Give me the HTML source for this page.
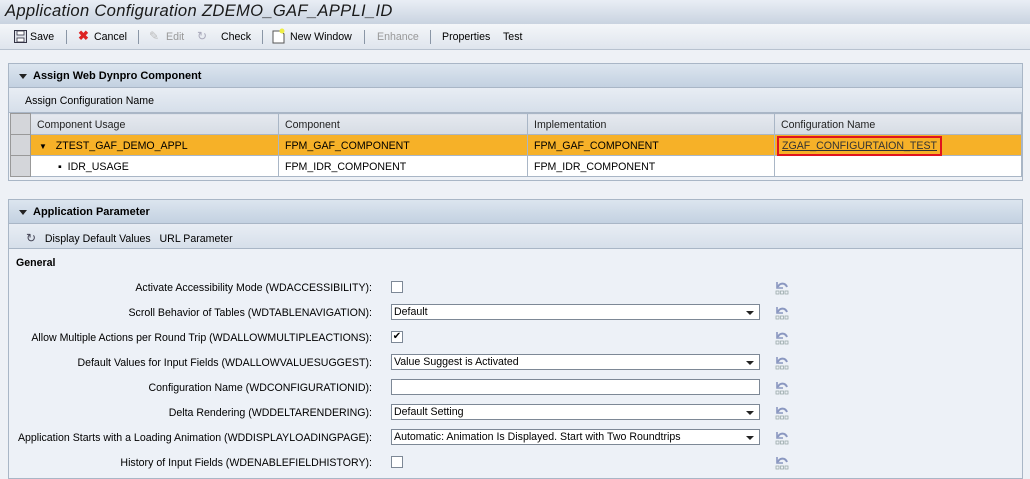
<!DOCTYPE html>
<html><head><meta charset="utf-8"><style>
*{margin:0;padding:0;box-sizing:border-box}
body{width:1030px;height:470px;overflow:hidden;background:#eef1f6;font-family:"Liberation Sans",Arial,sans-serif;font-size:10.6px;color:#000;position:relative}
.a{position:absolute;white-space:nowrap}
#title{left:0;top:0;width:1030px;height:24px;background:linear-gradient(#e9eef5,#c9d3e0);}
#title span{position:absolute;left:5px;top:1px;font-size:16.6px;font-style:italic;color:#1a1a1a;letter-spacing:.3px}
#tb{left:0;top:24px;width:1030px;height:26px;background:linear-gradient(#f4f6f9,#dfe5ed);border-bottom:1px solid #b8c2cf}
.sep{position:absolute;top:6px;width:1px;height:14px;background:#8a96a6}
.panel{position:absolute;left:8px;width:1015px;border:1px solid #a9b6c6;background:#eef1f6}
.ph{height:24px;background:linear-gradient(#dce5ef,#c3d1e1);border-bottom:1px solid #a9b6c6;font-weight:bold;font-size:11px;padding:6px 0 0 24px;position:relative}
.ph:before{content:"";position:absolute;left:10px;top:10px;border-left:4px solid transparent;border-right:4px solid transparent;border-top:5px solid #222}
.sub{height:25px;background:linear-gradient(#e8edf4,#d6dfea);border-bottom:1px solid #a9b6c6;padding:7px 0 0 16px}
table{border-collapse:collapse;width:1012px;margin-left:1px}
td{height:21px;border:1px solid #a9b6c6;padding:1px 6px 0;font-size:10.6px}
tr.h td{background:linear-gradient(#e5e9ef,#d6dce4);color:#222}
tr.o td{background:#f6b128}
tr.w td{background:#fff}
td.sel{width:20px;background:#d4d6da!important;border-color:#999 !important}
.lbl{position:absolute;right:658px;white-space:nowrap;text-align:right}
.cb{position:absolute;left:391px;width:12px;height:12px;border:1px solid #7d8896;background:#fff}
.dd{position:absolute;left:391px;width:369px;height:16px;border:1px solid #7d8896;background:#fff;padding:1px 2px}
.dd.s:after{content:"";position:absolute;right:5px;top:6px;border-left:4px solid transparent;border-right:4px solid transparent;border-top:4px solid #222}
.un{position:absolute;left:774px;width:16px;height:15px}
</style></head><body>
<div id="title" class="a"><span>Application Configuration ZDEMO_GAF_APPLI_ID</span></div>
<div id="tb" class="a">
<svg class="a" style="left:14px;top:6px" width="13" height="13" viewBox="0 0 13 13"><rect x=".5" y=".5" width="12" height="12" fill="#dfe3ea" stroke="#334"/><rect x="3" y="1" width="7" height="4" fill="#fff" stroke="#334" stroke-width=".8"/><rect x="3" y="8" width="7" height="4" fill="#fff" stroke="#334" stroke-width=".8"/></svg>
<span class="a" style="left:30px;top:7px">Save</span><div class="sep" style="left:66px"></div>
<span class="a" style="left:78px;top:4px;color:#d22;font-size:13px;font-weight:bold">✖</span>
<span class="a" style="left:94px;top:7px">Cancel</span><div class="sep" style="left:138px"></div>
<span class="a" style="left:149px;top:5px;color:#bbb;font-size:12px">✎</span>
<span class="a" style="left:166px;top:7px;color:#999">Edit</span>
<span class="a" style="left:197px;top:5px;color:#aab;font-size:12px">↻</span>
<span class="a" style="left:221px;top:7px">Check</span><div class="sep" style="left:262px"></div>
<svg class="a" style="left:272px;top:4px" width="14" height="16" viewBox="0 0 14 16"><path d="M1 3h8l3 3v9H1z" fill="#fff" stroke="#555"/><circle cx="10" cy="3" r="2.5" fill="#ee4"/></svg>
<span class="a" style="left:290px;top:7px">New Window</span><div class="sep" style="left:364px"></div>
<span class="a" style="left:377px;top:7px;color:#999">Enhance</span><div class="sep" style="left:430px"></div>
<span class="a" style="left:442px;top:7px">Properties</span>
<span class="a" style="left:503px;top:7px">Test</span>
</div>

<div class="panel" style="top:63px;height:118px">
<div class="ph">Assign Web Dynpro Component</div>
<div class="sub">Assign Configuration Name</div>
<table>
<tr class="h"><td class="sel"></td><td style="width:248px">Component Usage</td><td style="width:249px">Component</td><td style="width:247px">Implementation</td><td>Configuration Name</td></tr>
<tr class="o"><td class="sel"></td><td><span style="font-size:8px;margin-left:2px">▼</span>&nbsp;&nbsp; ZTEST_GAF_DEMO_APPL</td><td>FPM_GAF_COMPONENT</td><td>FPM_GAF_COMPONENT</td><td><span style="text-decoration:underline;color:#333;outline:2px solid #e0141e;outline-offset:2px;padding:0 1px">ZGAF_CONFIGURTAION_TEST</span></td></tr>
<tr class="w"><td class="sel"></td><td style="padding-left:27px">▪ &nbsp;IDR_USAGE</td><td>FPM_IDR_COMPONENT</td><td>FPM_IDR_COMPONENT</td><td></td></tr>
</table>
</div>

<div class="panel" style="top:199px;height:280px;background:#edf1f7">
<div class="ph">Application Parameter</div>
<div class="sub" style="padding-left:17px"><span style="color:#445;font-size:12px">↻</span>&nbsp;&nbsp; Display Default Values &nbsp; URL Parameter</div>
</div>
<span class="a" style="left:16px;top:257px;font-weight:bold">General</span>

<span class="lbl" style="top:282px">Activate Accessibility Mode (WDACCESSIBILITY):</span><div class="cb" style="top:281px"></div>
<span class="lbl" style="top:307px">Scroll Behavior of Tables (WDTABLENAVIGATION):</span><div class="dd s" style="top:304px">Default</div>
<span class="lbl" style="top:332px">Allow Multiple Actions per Round Trip (WDALLOWMULTIPLEACTIONS):</span><div class="cb" style="top:331px;font-size:10px;line-height:10px;text-align:center">✔</div>
<span class="lbl" style="top:357px">Default Values for Input Fields (WDALLOWVALUESUGGEST):</span><div class="dd s" style="top:354px">Value Suggest is Activated</div>
<span class="lbl" style="top:382px">Configuration Name (WDCONFIGURATIONID):</span><div class="dd" style="top:379px"></div>
<span class="lbl" style="top:407px">Delta Rendering (WDDELTARENDERING):</span><div class="dd s" style="top:404px">Default Setting</div>
<span class="lbl" style="top:432px">Application Starts with a Loading Animation (WDDISPLAYLOADINGPAGE):</span><div class="dd s" style="top:429px">Automatic: Animation Is Displayed. Start with Two Roundtrips</div>
<span class="lbl" style="top:457px">History of Input Fields (WDENABLEFIELDHISTORY):</span><div class="cb" style="top:456px"></div>

<svg width="0" height="0" style="position:absolute"><defs><g id="u"><path d="M3 2v6h6" fill="none" stroke="#8a97c0" stroke-width="1.6"/><path d="M4 7c1-4 7-5 9 0" fill="none" stroke="#8a97c0" stroke-width="2"/><rect x="2" y="11" width="3" height="3" fill="none" stroke="#9aa" stroke-width=".8"/><rect x="6.5" y="11" width="3" height="3" fill="none" stroke="#9aa" stroke-width=".8"/><rect x="11" y="11" width="3" height="3" fill="none" stroke="#9aa" stroke-width=".8"/></g></defs></svg>
<svg class="un" style="top:280px"><use href="#u"/></svg>
<svg class="un" style="top:305px"><use href="#u"/></svg>
<svg class="un" style="top:330px"><use href="#u"/></svg>
<svg class="un" style="top:355px"><use href="#u"/></svg>
<svg class="un" style="top:380px"><use href="#u"/></svg>
<svg class="un" style="top:405px"><use href="#u"/></svg>
<svg class="un" style="top:430px"><use href="#u"/></svg>
<svg class="un" style="top:455px"><use href="#u"/></svg>
</body></html>
